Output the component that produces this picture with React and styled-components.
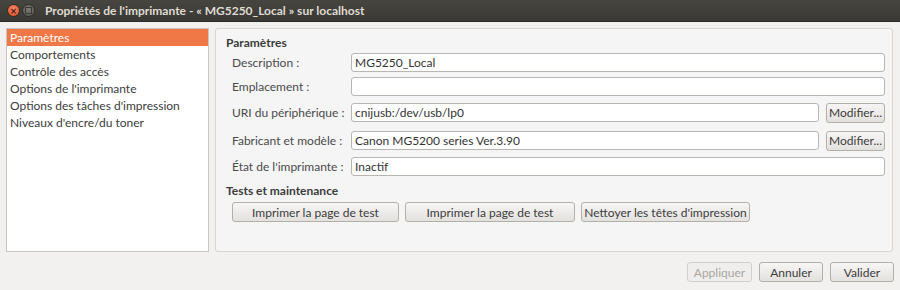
import React from 'react';
import styled, { createGlobalStyle } from 'styled-components';

const GlobalStyle = createGlobalStyle`
  html, body {
    margin: 0;
    padding: 0;
    background: #f2f1f0;
  }
  body {
    font-family: Lato, "Open Sans", "Liberation Sans", sans-serif;
    font-size: 12px;
    color: #3c3c3c;
  }
  * {
    box-sizing: border-box;
  }
`;

const pages = [
  'Paramètres',
  'Comportements',
  'Contrôle des accès',
  "Options de l'imprimante",
  "Options des tâches d'impression",
  "Niveaux d'encre/du toner",
];

const fields = [
  { label: 'Description :', value: 'MG5250_Local' },
  { label: 'Emplacement :', value: '' },
  { label: 'URI du périphérique :', value: 'cnijusb:/dev/usb/lp0', edit: true },
  { label: 'Fabricant et modèle :', value: 'Canon MG5200 series Ver.3.90', edit: true },
  { label: "État de l'imprimante :", value: 'Inactif' },
];

const App = () => {
  return (
    <>
      <GlobalStyle />
      <Window>
        <TitleBar>
          <WinButton close>×</WinButton>
          <WinButton />
          <Title>Propriétés de l'imprimante - « MG5250_Local » sur localhost</Title>
        </TitleBar>
        <Body>
          <PageList>
            {pages.map((p, i) => (
              <PageItem key={p} selected={i === 0}>{p}</PageItem>
            ))}
          </PageList>
          <Panel>
            <SectionTitle>Paramètres</SectionTitle>
            <FieldGrid>
              {fields.map((f) => (
                <React.Fragment key={f.label}>
                  <Label>{f.label}</Label>
                  <FieldRow edit={f.edit}>
                    <Input>{f.value}</Input>
                    {f.edit && <Button width="59px">Modifier...</Button>}
                  </FieldRow>
                </React.Fragment>
              ))}
            </FieldGrid>
            <SectionTitle second>Tests et maintenance</SectionTitle>
            <TestRow>
              <Button width="167px">Imprimer la page de test</Button>
              <Button width="170px">Imprimer la page de test</Button>
              <Button width="169px">Nettoyer les têtes d'impression</Button>
            </TestRow>
          </Panel>
        </Body>
        <Footer>
          <Button disabled width="65px">Appliquer</Button>
          <Button width="64px">Annuler</Button>
          <Button width="64px">Valider</Button>
        </Footer>
      </Window>
    </>
  );
};

export default App;

const Window = styled.div`
  width: 900px;
  height: 290px;
  display: flex;
  flex-direction: column;
  background: #f2f1f0;
  overflow: hidden;
`;

const TitleBar = styled.div`
  height: 22px;
  flex: none;
  display: flex;
  align-items: center;
  padding-left: 7px;
  gap: 2px;
  background: linear-gradient(#46453f, #3a3935);
  border-bottom: 1px solid #2b2a27;
`;

const WinButton = styled.div`
  width: 13px;
  height: 13px;
  border-radius: 50%;
  display: flex;
  align-items: center;
  justify-content: center;
  font-size: 11px;
  line-height: 1;
  font-weight: bold;
  color: #4a2010;
  background: ${(p) =>
    p.close
      ? 'radial-gradient(circle at 50% 35%, #f4866a, #df4a1e)'
      : 'radial-gradient(circle at 50% 35%, #7b7a74, #55544f)'};
  border: 1px solid #2e2d2a;
  &::after {
    content: '';
    display: ${(p) => (p.close ? 'none' : 'block')};
    width: 5px;
    height: 5px;
    border: 1px solid #3a3935;
  }
`;

const Title = styled.div`
  margin-left: 8px;
  color: #dfdbd2;
  font-weight: bold;
  font-size: 12px;
  white-space: nowrap;
`;

const Body = styled.div`
  display: flex;
  gap: 6px;
  padding: 6px 7px 0 6px;
  height: 230px;
  flex: none;
`;

const PageList = styled.div`
  width: 203px;
  flex: none;
  background: #fff;
  border: 1px solid #c9c6c1;
`;

const PageItem = styled.div`
  height: 17px;
  line-height: 17px;
  padding-left: 3px;
  font-size: 12px;
  white-space: nowrap;
  color: ${(p) => (p.selected ? '#fff' : '#3c3c3c')};
  background: ${(p) => (p.selected ? '#f07746' : 'transparent')};
`;

const Panel = styled.div`
  flex: 1;
  background: #f5f5f5;
  border: 1px solid #d8d4cf;
  border-radius: 3px;
  padding: 5px 7px 0 10px;
`;

const SectionTitle = styled.div`
  font-weight: bold;
  font-size: 12px;
  height: 17px;
  line-height: 17px;
  color: #3c3c3c;
  margin-top: ${(p) => (p.second ? '6px' : '0')};
`;

const FieldGrid = styled.div`
  display: grid;
  grid-template-columns: 119px 1fr;
  row-gap: 5px;
  align-items: center;
  padding-left: 6px;
  margin-top: 2px;
`;

const Label = styled.div`
  font-size: 12px;
  color: #4a4a4a;
  white-space: nowrap;
`;

const FieldRow = styled.div`
  display: flex;
  gap: 7px;
  align-items: center;
  height: ${(p) => (p.edit ? '23px' : '19px')};
`;

const Input = styled.div`
  flex: 1;
  height: 19px;
  line-height: 17px;
  padding-left: 3px;
  background: #fff;
  border: 1px solid #b9b6b1;
  border-radius: 3px;
  font-size: 12px;
  color: #333;
  white-space: nowrap;
`;

const Button = styled.div`
  flex: none;
  height: 20px;
  width: ${(p) => p.width || 'auto'};
  display: flex;
  align-items: center;
  justify-content: center;
  font-size: 12px;
  white-space: nowrap;
  color: ${(p) => (p.disabled ? '#a8a6a2' : '#3c3c3c')};
  background: ${(p) =>
    p.disabled ? '#efeeed' : 'linear-gradient(#f7f6f5, #e3e1de)'};
  border: 1px solid ${(p) => (p.disabled ? '#d3d0cc' : '#b3afa9')};
  border-radius: 3px;
`;

const TestRow = styled.div`
  display: flex;
  gap: 6px;
  padding-left: 6px;
  margin-top: 3px;
`;

const Footer = styled.div`
  display: flex;
  justify-content: flex-end;
  gap: 7px;
  padding: 10px 6px 0 0;
`;
